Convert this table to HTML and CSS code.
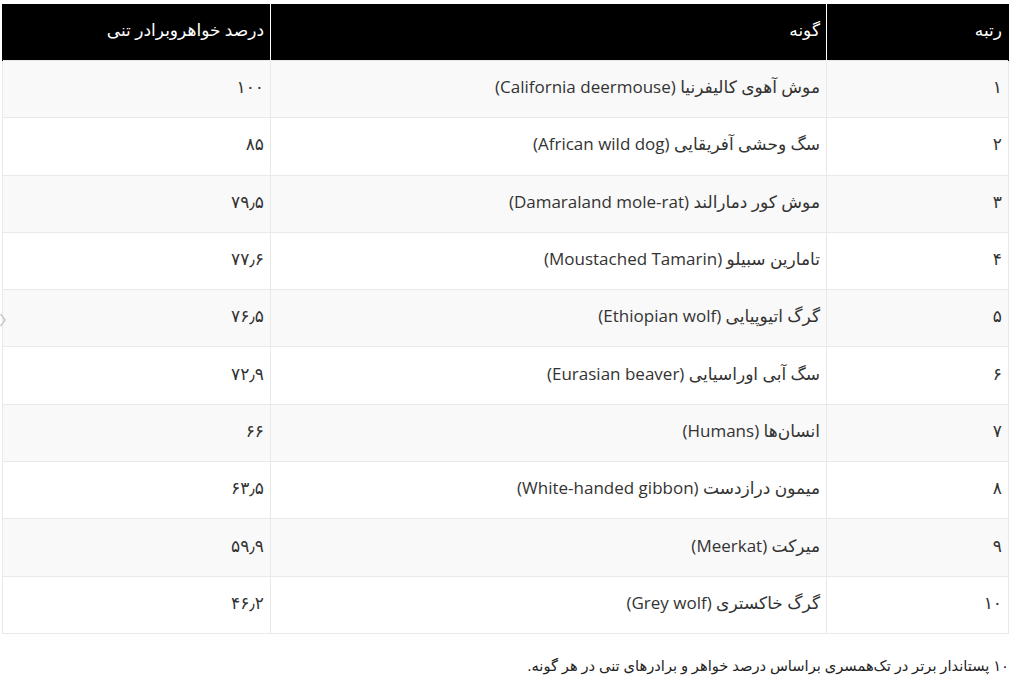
FILE: index.html
```html
<!DOCTYPE html>
<html lang="fa" dir="rtl">
<head>
<meta charset="utf-8">
<link rel="stylesheet" href="styles.css">
</head>
<body>
<div class="page">
  <table class="rank-table">
    <thead>
      <tr><th class="c-rank">رتبه</th><th class="c-species">گونه</th><th class="c-pct">درصد خواهروبرادر تنی</th></tr>
    </thead>
    <tbody>
      <tr><td>۱</td><td>موش آهوی کالیفرنیا (California deermouse)</td><td>۱۰۰</td></tr>
      <tr><td>۲</td><td>سگ وحشی آفریقایی (African wild dog)</td><td>۸۵</td></tr>
      <tr><td>۳</td><td>موش کور دمارالند (Damaraland mole-rat)</td><td>۷۹٫۵</td></tr>
      <tr><td>۴</td><td>تامارین سبیلو (Moustached Tamarin)</td><td>۷۷٫۶</td></tr>
      <tr><td>۵</td><td>گرگ اتیوپیایی (Ethiopian wolf)</td><td>۷۶٫۵</td></tr>
      <tr><td>۶</td><td>سگ آبی اوراسیایی (Eurasian beaver)</td><td>۷۲٫۹</td></tr>
      <tr><td>۷</td><td>انسان‌ها (Humans)</td><td>۶۶</td></tr>
      <tr><td>۸</td><td>میمون درازدست (White-handed gibbon)</td><td>۶۳٫۵</td></tr>
      <tr><td>۹</td><td>میرکت (Meerkat)</td><td>۵۹٫۹</td></tr>
      <tr><td>۱۰</td><td>گرگ خاکستری (Grey wolf)</td><td>۴۶٫۲</td></tr>
    </tbody>
  </table>
  <p class="caption">۱۰ پستاندار برتر در تک‌همسری براساس درصد خواهر و برادرهای تنی در هر گونه.</p>
  <svg class="edge-arrow" width="6" height="14" viewBox="0 0 6 14"><path d="M0.5 1 L5 7 L0.5 13" fill="none" stroke="#c8c8c8" stroke-width="1.5"/></svg>
</div>
</body>
</html>
```

FILE: styles.css
```css
html, body {
  margin: 0;
  padding: 0;
  background: #fff;
}
body {
  font-family: "Open Sans", "DejaVu Sans", sans-serif;
  color: #333;
}
.page {
  position: relative;
  padding: 4px 11px 0 1px;
}
.rank-table {
  width: 1007px;
  border-collapse: collapse;
  font-size: 17px;
}
.rank-table th {
  background: #000;
  color: #fff;
  font-weight: normal;
  text-align: right;
  height: 50px;
  padding: 0 6px 6px;
  border-left: 1px solid #fff;
  border-right: 1px solid #fff;
  font-size: 17px;
}
.rank-table th:first-child { border-right: 1px solid #000; }
.rank-table th:last-child { border-left: 1px solid #000; }
.c-rank { width: 169px; }
.c-species { width: 543px; }
.rank-table td {
  height: 51.3px;
  padding: 0 6px 5px;
  text-align: right;
  border: 1px solid #e9e9e9;
  color: #333;
}
.rank-table tbody tr:nth-child(odd) td { background: #f9f9f9; }
.caption {
  margin: 21px 0 0;
  font-size: 14.7px;
  color: #222;
  text-align: right;
}
.edge-arrow {
  position: absolute;
  left: 0;
  top: 313px;
}
```
